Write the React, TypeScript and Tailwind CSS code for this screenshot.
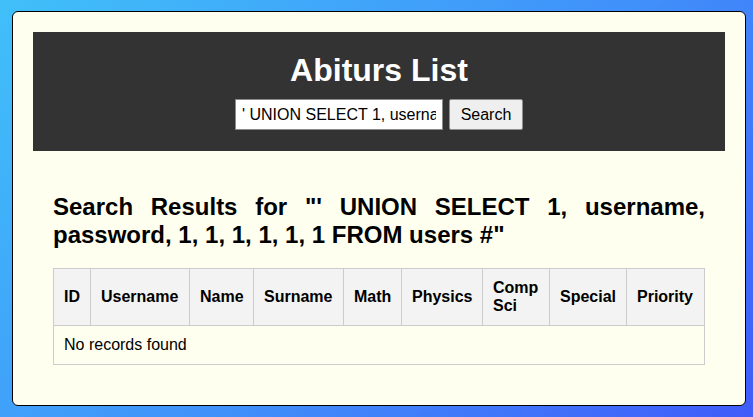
import React from 'react';

const COLS = [
  { label: 'ID', w: 37 },
  { label: 'Username', w: 99 },
  { label: 'Name', w: 64 },
  { label: 'Surname', w: 90 },
  { label: 'Math', w: 58 },
  { label: 'Physics', w: 81 },
  { label: 'Comp Sci', w: 67 },
  { label: 'Special', w: 77 },
  { label: 'Priority', w: 78 },
];

const query = "' UNION SELECT 1, username, password, 1, 1, 1, 1, 1, 1 FROM users #";

export default function App() {
  return (
    <div className="h-[417px] w-full overflow-hidden bg-[linear-gradient(135deg,#40c0f9_0%,#4090fa_55%,#405cfa_100%)] pt-[11px] pl-[12px] font-['Liberation_Sans',Arial,sans-serif] text-black">
      <div className="w-[734px] rounded-[6px] border border-black bg-[#fffff0] p-5">
        {/* header */}
        <div className="bg-[#333333] px-5 pt-5 pb-[21px] text-center">
          <h1 className="mb-[10px] text-[32px] leading-[37px] font-bold text-white">Abiturs List</h1>
          <div className="flex items-center justify-center gap-[6px]">
            <input
              readOnly
              value={query}
              className="h-[31px] w-[208px] border border-[#8a8a8a] bg-white px-[6px] text-[16px] text-black outline-none"
            />
            <button className="h-[31px] w-[74px] rounded-[2px] border border-[#8f8f8f] bg-[#efefef] text-[16px] text-black">
              Search
            </button>
          </div>
        </div>

        {/* results */}
        <div className="p-5">
          <h2 className="mt-[22px] mb-5 text-justify text-[24px] leading-[27.5px] font-bold">
            Search Results for "{query}"
          </h2>
          <table className="w-[651px] table-fixed border-collapse text-[16px]">
            <colgroup>
              {COLS.map(c => (
                <col key={c.label} style={{ width: c.w }} />
              ))}
            </colgroup>
            <thead>
              <tr className="bg-[#f3f3f3]">
                {COLS.map(c => (
                  <th key={c.label} className="border border-[#cccccc] p-[10px] text-left leading-[18px] font-bold">
                    {c.label}
                  </th>
                ))}
              </tr>
            </thead>
            <tbody>
              <tr>
                <td colSpan={9} className="border border-[#cccccc] p-[10px] leading-[18px]">
                  No records found
                </td>
              </tr>
            </tbody>
          </table>
        </div>
      </div>
    </div>
  );
}
